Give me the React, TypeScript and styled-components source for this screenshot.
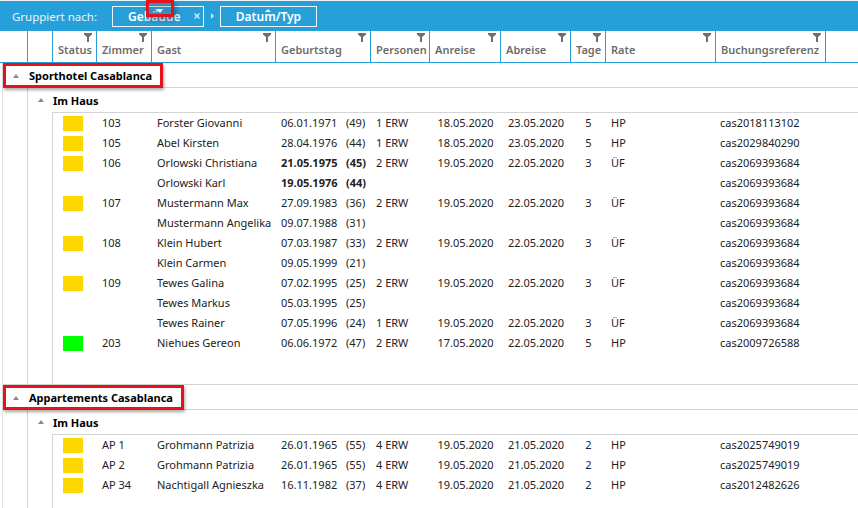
import React from "react";
import styled, { createGlobalStyle } from "styled-components";

const BLUE = "#27a0da";
const LINE = "#d4d4d4";

const GlobalStyle = createGlobalStyle`
  html, body {
    margin: 0;
    padding: 0;
    background: #fff;
  }
  body {
    font-family: "Noto Sans", "Open Sans", sans-serif;
    font-size: 11px;
    color: #222;
  }
  #root {
    width: 858px;
    height: 508px;
    overflow: hidden;
  }
`;

const DATA_COLS = "44px 55px 124px 95px 59px 71px 70px 35px 110px 110px 1fr";

// ---------- top bar ----------

const TopBar = styled.div`
  height: 30px;
  border-top: 1px solid #eef3f6;
  background: ${BLUE};
  display: flex;
  align-items: center;
  padding-left: 12px;
  color: #fff;
`;

const BarLabel = styled.span`
  font-size: 11.5px;
  color: #e9f5fc;
  margin-right: 15px;
`;

const Chip = styled.div<{ $w: number; $center?: boolean }>`
  position: relative;
  box-sizing: border-box;
  width: ${(p) => p.$w}px;
  height: 21px;
  border: 1px solid rgba(255, 255, 255, 0.92);
  display: flex;
  align-items: center;
  justify-content: ${(p) => (p.$center ? "center" : "flex-start")};
  padding-left: ${(p) => (p.$center ? 0 : 15)}px;
  font-size: 12px;
  font-weight: 600;
  color: #fff;
`;

const SortMark = styled.span<{ $down?: boolean }>`
  position: absolute;
  top: 2px;
  left: 50%;
  margin-left: -3px;
  width: 0;
  height: 0;
  border-left: 3px solid transparent;
  border-right: 3px solid transparent;
  ${(p) =>
    p.$down ? "border-top: 3px solid #fff;" : "border-bottom: 3px solid #fff;"}
`;

const DragMarker = styled.div`
  position: absolute;
  left: 33px;
  top: -7px;
  width: 28px;
  height: 17px;
  box-sizing: border-box;
  border: 3px solid #e3121b;
  background: rgba(70, 100, 125, 0.25);
  box-shadow: 2px 3px 5px rgba(0, 0, 0, 0.35);
  display: flex;
  align-items: flex-end;
  justify-content: center;
  padding-bottom: 1px;
`;

const DragArrow = styled.span`
  width: 0;
  height: 0;
  border-left: 3px solid transparent;
  border-right: 3px solid transparent;
  border-top: 4px solid #fff;
`;

const CloseBtn = styled.span`
  margin-left: auto;
  margin-right: 3px;
  display: flex;
`;

const Separator = styled.span`
  width: 0;
  height: 0;
  margin: 0 6px 0 7px;
  border-top: 3px solid transparent;
  border-bottom: 3px solid transparent;
  border-left: 3px solid #cfe8f6;
`;

// ---------- column header ----------

const HeaderRow = styled.div`
  box-sizing: border-box;
  height: 32px;
  display: grid;
  grid-template-columns: 28px 25px ${DATA_COLS};
  border-bottom: 1px solid ${BLUE};
`;

const HeaderCell = styled.div<{ $last?: boolean }>`
  box-sizing: border-box;
  border-right: ${(p) => (p.$last ? "none" : `1px solid ${BLUE}`)};
  display: flex;
  flex-direction: column;
  justify-content: space-between;
  overflow: hidden;
`;

const Funnel = styled.svg`
  align-self: flex-end;
  margin: 2px 4px 0 0;
  flex: none;
`;

const HeaderLabel = styled.span`
  padding: 0 0 8px 5px;
  line-height: 15px;
  font-weight: 600;
  color: #6c6c6c;
  white-space: nowrap;
`;

// ---------- body ----------

const Body = styled.div`
  margin-left: 2px;
  border-left: 1px solid #e2e2e2;
`;

const Group = styled.div`
  border-bottom: 1px solid ${LINE};
`;

const GroupHeader = styled.div`
  height: 24px;
  border-bottom: 1px solid ${LINE};
  display: flex;
  align-items: flex-start;
`;

const HighlightBox = styled.div`
  position: relative;
  z-index: 1;
  box-sizing: border-box;
  height: 25px;
  border: 3px solid #e3121b;
  box-shadow: 1px 2px 3px rgba(0, 0, 0, 0.35);
  background: #fff;
  display: flex;
  align-items: center;
  gap: 10px;
  padding: 0 8px 0 7px;
  font-weight: 700;
  color: #000;
`;

const Caret = styled.span`
  width: 0;
  height: 0;
  border-left: 3px solid transparent;
  border-right: 3px solid transparent;
  border-bottom: 4px solid #8a8a8a;
`;

const Content = styled.div`
  display: flex;
`;

const Indent = styled.div`
  width: 24px;
  flex: none;
`;

const Nested = styled.div`
  flex: 1;
  border-left: 1px solid ${LINE};
`;

const SubHeader = styled.div`
  height: 24px;
  display: flex;
  align-items: center;
  gap: 9px;
  padding-left: 10px;
  font-weight: 700;
  color: #000;
`;

const Panel = styled.div`
  flex: 1;
  border-left: 1px solid ${LINE};
  border-top: 1px solid ${LINE};
`;

const DataRow = styled.div`
  height: 20px;
  display: grid;
  grid-template-columns: ${DATA_COLS};
  line-height: 20px;
`;

const Cell = styled.div<{ $pl?: number; $center?: boolean; $bold?: boolean }>`
  padding-left: ${(p) => (p.$center ? 0 : p.$pl ?? 5)}px;
  font-weight: ${(p) => (p.$bold ? 700 : 400)};
  white-space: nowrap;
  overflow: hidden;
  display: flex;
  align-items: center;
  justify-content: ${(p) => (p.$center ? "center" : "flex-start")};
`;

const StatusBox = styled.span<{ $color: string }>`
  width: 20px;
  height: 15px;
  background: ${(p) => p.$color};
`;

const BirthDate = styled.span`
  display: inline-block;
  width: 65px;
`;

const Spacer = styled.div`
  height: 31px;
`;

type Booking = {
  status?: "y" | "g";
  room?: string;
  guest: string;
  birth: string;
  age: string;
  bold?: boolean;
  persons?: string;
  arrival?: string;
  departure?: string;
  days?: string;
  rate?: string;
  ref: string;
};

const sporthotel: Booking[] = [
  { status: "y", room: "103", guest: "Forster Giovanni", birth: "06.01.1971", age: "(49)", persons: "1 ERW", arrival: "18.05.2020", departure: "23.05.2020", days: "5", rate: "HP", ref: "cas2018113102" },
  { status: "y", room: "105", guest: "Abel Kirsten", birth: "28.04.1976", age: "(44)", persons: "1 ERW", arrival: "18.05.2020", departure: "23.05.2020", days: "5", rate: "HP", ref: "cas2029840290" },
  { status: "y", room: "106", guest: "Orlowski Christiana", birth: "21.05.1975", age: "(45)", bold: true, persons: "2 ERW", arrival: "19.05.2020", departure: "22.05.2020", days: "3", rate: "ÜF", ref: "cas2069393684" },
  { guest: "Orlowski Karl", birth: "19.05.1976", age: "(44)", bold: true, ref: "cas2069393684" },
  { status: "y", room: "107", guest: "Mustermann Max", birth: "27.09.1983", age: "(36)", persons: "2 ERW", arrival: "19.05.2020", departure: "22.05.2020", days: "3", rate: "ÜF", ref: "cas2069393684" },
  { guest: "Mustermann Angelika", birth: "09.07.1988", age: "(31)", ref: "cas2069393684" },
  { status: "y", room: "108", guest: "Klein Hubert", birth: "07.03.1987", age: "(33)", persons: "2 ERW", arrival: "19.05.2020", departure: "22.05.2020", days: "3", rate: "ÜF", ref: "cas2069393684" },
  { guest: "Klein Carmen", birth: "09.05.1999", age: "(21)", ref: "cas2069393684" },
  { status: "y", room: "109", guest: "Tewes Galina", birth: "07.02.1995", age: "(25)", persons: "2 ERW", arrival: "19.05.2020", departure: "22.05.2020", days: "3", rate: "ÜF", ref: "cas2069393684" },
  { guest: "Tewes Markus", birth: "05.03.1995", age: "(25)", ref: "cas2069393684" },
  { guest: "Tewes Rainer", birth: "07.05.1996", age: "(24)", persons: "1 ERW", arrival: "19.05.2020", departure: "22.05.2020", days: "3", rate: "ÜF", ref: "cas2069393684" },
  { status: "g", room: "203", guest: "Niehues Gereon", birth: "06.06.1972", age: "(47)", persons: "2 ERW", arrival: "17.05.2020", departure: "22.05.2020", days: "5", rate: "HP", ref: "cas2009726588" },
];

const appartements: Booking[] = [
  { status: "y", room: "AP 1", guest: "Grohmann Patrizia", birth: "26.01.1965", age: "(55)", persons: "4 ERW", arrival: "19.05.2020", departure: "21.05.2020", days: "2", rate: "HP", ref: "cas2025749019" },
  { status: "y", room: "AP 2", guest: "Grohmann Patrizia", birth: "26.01.1965", age: "(55)", persons: "4 ERW", arrival: "19.05.2020", departure: "21.05.2020", days: "2", rate: "HP", ref: "cas2025749019" },
  { status: "y", room: "AP 34", guest: "Nachtigall Agnieszka", birth: "16.11.1982", age: "(37)", persons: "4 ERW", arrival: "19.05.2020", departure: "21.05.2020", days: "2", rate: "HP", ref: "cas2012482626" },
];

const headers = [
  "Status",
  "Zimmer",
  "Gast",
  "Geburtstag",
  "Personen",
  "Anreise",
  "Abreise",
  "Tage",
  "Rate",
  "Buchungsreferenz",
];

const FunnelIcon = () => (
  <Funnel width="8" height="9" viewBox="0 0 8 9">
    <path d="M0 0H8V1.5L5 4V9H3V4L0 1.5Z" fill="#6e6e6e" />
  </Funnel>
);

const BookingRow = ({ b }: { b: Booking }) => (
  <DataRow>
    <Cell $pl={10}>
      {b.status && <StatusBox $color={b.status === "g" ? "#00ff00" : "#ffd700"} />}
    </Cell>
    <Cell>{b.room}</Cell>
    <Cell>{b.guest}</Cell>
    <Cell $bold={b.bold}>
      <BirthDate>{b.birth}</BirthDate>
      {b.age}
    </Cell>
    <Cell>{b.persons}</Cell>
    <Cell $center>{b.arrival}</Cell>
    <Cell $center>{b.departure}</Cell>
    <Cell $center>{b.days}</Cell>
    <Cell>{b.rate}</Cell>
    <Cell $pl={4}>{b.ref}</Cell>
    <Cell />
  </DataRow>
);

const HotelGroup = ({ name, rows }: { name: string; rows: Booking[] }) => (
  <Group>
    <GroupHeader>
      <HighlightBox>
        <Caret />
        {name}
      </HighlightBox>
    </GroupHeader>
    <Content>
      <Indent />
      <Nested>
        <SubHeader>
          <Caret />
          Im Haus
        </SubHeader>
        <Content>
          <Indent />
          <Panel>
            {rows.map((b, i) => (
              <BookingRow key={i} b={b} />
            ))}
            <Spacer />
          </Panel>
        </Content>
      </Nested>
    </Content>
  </Group>
);

export default function App() {
  return (
    <>
      <GlobalStyle />
      <TopBar>
        <BarLabel>Gruppiert nach:</BarLabel>
        <Chip $w={92}>
          <SortMark $down />
          Gebäude
          <CloseBtn>
            <svg width="6" height="6" viewBox="0 0 6 6">
              <path d="M0.5 0.5L5.5 5.5M5.5 0.5L0.5 5.5" stroke="#e4f2fb" strokeWidth="1.1" />
            </svg>
          </CloseBtn>
          <DragMarker>
            <DragArrow />
          </DragMarker>
        </Chip>
        <Separator />
        <Chip $w={97} $center>
          <SortMark />
          Datum/Typ
        </Chip>
      </TopBar>

      <HeaderRow>
        <HeaderCell />
        <HeaderCell />
        {headers.map((h) => (
          <HeaderCell key={h}>
            <FunnelIcon />
            <HeaderLabel>{h}</HeaderLabel>
          </HeaderCell>
        ))}
        <HeaderCell $last />
      </HeaderRow>

      <Body>
        <HotelGroup name="Sporthotel Casablanca" rows={sporthotel} />
        <HotelGroup name="Appartements Casablanca" rows={appartements} />
      </Body>
    </>
  );
}
